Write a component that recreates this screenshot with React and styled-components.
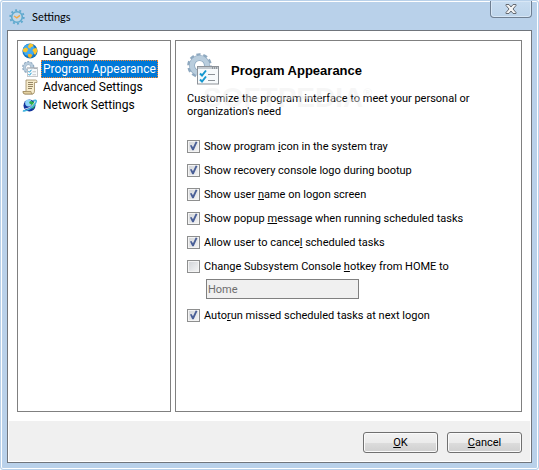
import React, { useState } from 'react'
import styled, { createGlobalStyle } from 'styled-components'

const GlobalStyle = createGlobalStyle`
  * {
    box-sizing: border-box;
  }
  body {
    margin: 0;
    font-family: Roboto, 'Noto Sans', sans-serif;
    font-size: 11px;
    color: #000;
  }
  button, input {
    font: inherit;
    color: inherit;
  }
`

const Window = styled.div`
  display: flex;
  flex-direction: column;
  min-height: 100vh;
  padding: 0 6px 6px;
  border: 1px solid #b9d1ea;
  border-radius: 3px;
  background: #b9d1ea;
  box-shadow: inset 0 0 0 1px #fff;
`

const TitleBar = styled.header`
  display: flex;
  align-items: center;
  gap: 7px;
  height: 29px;
  padding: 2px 2px 0;
  font-family: Lato, 'Noto Sans', sans-serif;
`

const CloseButton = styled.button`
  display: flex;
  justify-content: center;
  align-self: flex-start;
  width: 42px;
  height: 17px;
  margin: -2px -2px 0 auto;
  padding: 3px 0 0;
  border: 1px solid #6f7f92;
  border-top: 0;
  border-radius: 0 0 4px 4px;
  background: linear-gradient(#c8dcf0, #bdd4eb);
  box-shadow: inset 0 0 0 1px #d8e7f6;
`

const Client = styled.div`
  flex: 1;
  display: flex;
  flex-direction: column;
  border: 1px solid #70757c;
  background: #fff;
`

const Columns = styled.main`
  flex: 1;
  display: grid;
  grid-template-columns: 154px 1fr;
  gap: 4px;
  padding: 9px;
`

const Menu = styled.nav`
  display: flex;
  flex-direction: column;
  align-items: flex-start;
  border: 1px solid #808080;
  padding: 1px 4px;
`

const MenuItem = styled.button`
  display: flex;
  align-items: center;
  gap: 3px;
  height: 18px;
  padding: 0;
  border: 0;
  background: none;
  font-size: 12px;
  white-space: nowrap;
`

const MenuLabel = styled.span`
  height: 18px;
  padding: 0 1px;
  line-height: 16px;
  border: 1px dotted ${(props) => (props.$active ? '#ff8728' : 'transparent')};
  background: ${(props) => (props.$active ? '#0078d7' : 'none')};
  color: ${(props) => (props.$active ? '#fff' : '#000')};
`

const Page = styled.section`
  border: 1px solid #808080;
  padding: 12px 11px;
`

const PageHeader = styled.div`
  display: flex;
  align-items: center;
  gap: 12px;
`

const Title = styled.h1`
  margin: 2px 0 0;
  font-family: 'Liberation Sans', Arial, sans-serif;
  font-size: 13px;
`

const Intro = styled.div`
  position: relative;
  margin-top: 7px;
`

const Description = styled.p`
  margin: 0;
  line-height: 13px;
`

const Watermark = styled.span`
  position: absolute;
  left: 16px;
  top: -8px;
  font-family: 'Liberation Sans', Arial, sans-serif;
  font-size: 28px;
  font-weight: bold;
  line-height: 28px;
  color: rgba(236, 236, 236, 0.45);
  pointer-events: none;

  sup {
    font-size: 12px;
    line-height: 0;
  }
`

const Options = styled.div`
  display: flex;
  flex-direction: column;
  gap: 8px;
  margin-top: 20px;
`

const Option = styled.label`
  display: flex;
  align-items: center;
  gap: 4px;
  height: 16px;
`

const CheckBox = styled.input`
  appearance: none;
  width: 13px;
  height: 13px;
  margin: 0;
  border: 1px solid #8e8f8f;
  background: linear-gradient(135deg, #d0d3d7, #f6f6f6);
  box-shadow: inset 0 0 0 1px #f4f4f4;

  &:checked::after {
    content: '';
    display: block;
    width: 11px;
    height: 11px;
    background: #4a5f97;
    clip-path: polygon(18% 46%, 32% 42%, 45% 62%, 70% 10%, 86% 14%, 52% 88%, 38% 88%);
  }
`

const HotkeyInput = styled.input`
  display: block;
  width: 153px;
  height: 20px;
  margin: 5px 0 0 19px;
  padding: 0 1px;
  border: 1px solid #808080;
  background: #f0f0f0;
  color: #6d6d6d;
`

const Footer = styled.footer`
  display: flex;
  justify-content: flex-end;
  gap: 9px;
  margin: 0 1px 1px;
  padding: 11px 8px 8px;
  background: #f0f0f0;
`

const Button = styled.button`
  width: 75px;
  height: 21px;
  padding: 0;
  border: 1px solid #707070;
  border-radius: 3px;
  background: linear-gradient(#f2f2f2, #ebebeb 50%, #dddddd 50%, #cfcfcf);
  box-shadow: inset 0 0 0 1px #fafafa;
`

function AppIcon() {
  return (
    <svg width="16" height="16" viewBox="0 0 16 16">
      <circle cx="8" cy="8" r="6.8" fill="none" stroke="#5ea9ce" strokeWidth="1.8" strokeDasharray="2 2.27" />
      <circle cx="8" cy="8" r="5.3" fill="#c3d8e8" stroke="#5ea9ce" strokeWidth="1.6" />
      <path d="M5 7l2.8 1.8L11 6.4" fill="none" stroke="#f0a848" strokeWidth="1.4" />
    </svg>
  )
}

function GlobeIcon() {
  return (
    <svg width="16" height="16" viewBox="0 0 16 16">
      <circle cx="8" cy="8" r="7.6" fill="#1675bd" />
      <circle cx="7" cy="7" r="6" fill="#41aaf0" />
      <path d="M8 .6l3.500 .8-.5 2.200-2 .4-.5 1.500-2-.5-.5-2z" fill="#fcc52c" />
      <path d="M1 6l3-1.500 2 1.500-.5 2-1.500 1.500L1 8.500z" fill="#fcc52c" />
      <path d="M11 6l3.500-1.200.9 3.200-1.800 3.500-1.600-.3-.3-2.200-1.200-1z" fill="#fcc52c" />
      <path d="M6 11l3 0 1.500 1.500-2 2.500-2.300-1z" fill="#f5b21f" />
    </svg>
  )
}

function AppearanceIcon({ size }) {
  return (
    <svg width={size} height={size} viewBox="0 0 32 32">
      <circle cx="12.500" cy="12.500" r="10.500" fill="none" stroke="#8fa9c0" strokeWidth="3.600" strokeDasharray="4 2.600" />
      <circle cx="12.500" cy="12.500" r="7.500" fill="none" stroke="#8fa9c0" strokeWidth="6" />
      <circle cx="12.500" cy="12.500" r="7.600" fill="none" stroke="#b9cddd" strokeWidth="4.600" />
      <rect x="10.500" y="13.500" width="21" height="17.500" fill="#f7fafc" stroke="#8d9298" />
      <path d="M11 14h20v2H11z" fill="#c3c9cf" />
      <path d="M25 15h1M27 15h1M29 15h1" stroke="#5f666d" />
      <path d="M13 20.500l2 2 4-5M13 26.500l2 2 4-5" fill="none" stroke="#1698cf" strokeWidth="2" />
      <path d="M21 21.500h7M21 27.500h7" stroke="#8d9298" />
    </svg>
  )
}

function ScrollIcon() {
  return (
    <svg width="16" height="16" viewBox="0 0 16 16">
      <path d="M4 1h9.500q1.500 0 1.500 1.500v1h-2.500V12q0 3-2 3H3q-2 0-2-2.500h3z" fill="#f6ebcb" stroke="#a08b62" strokeWidth=".8" />
      <path d="M1 12.500h8q0 2.500 1.500 2.500H3q-2 0-2-2.500z" fill="#e4d2a3" stroke="#a08b62" strokeWidth=".8" />
      <path d="M6 3.500h5M6 5.500h5M6 7.500h5M6 9.500h4" stroke="#8b7b59" strokeWidth=".9" />
    </svg>
  )
}

function NetworkIcon() {
  return (
    <svg width="16" height="16" viewBox="0 0 16 16">
      <circle cx="7.500" cy="8.500" r="6" fill="#12339c" />
      <circle cx="6.500" cy="6" r="3.400" fill="#8ed4f8" />
      <path d="M8 4l4 1 1 4-2 3-2-2 1-2-3-2z" fill="#2fae45" />
      <path d="M1 13.500c2 1.500 11-3 13-8.500 1-2-1-2-3-1.300" fill="none" stroke="#42b4dd" strokeWidth="1.600" />
      <path d="M3 12c4-.5 8-3.500 10-7" fill="none" stroke="#fff" strokeWidth=".8" />
    </svg>
  )
}

function CloseIcon() {
  return (
    <svg width="12" height="10" viewBox="0 0 12 10">
      <path d="M1 .5h3L6 3 8 .5h3v1L8 5l3 3.500v1H8L6 7 4 9.500H1v-1L4 5 1 1.500z" fill="#f4f4f4" stroke="#666b73" strokeLinejoin="round" />
    </svg>
  )
}

const pages = [
  { name: 'Language', icon: <GlobeIcon /> },
  { name: 'Program Appearance', icon: <AppearanceIcon size={16} /> },
  { name: 'Advanced Settings', icon: <ScrollIcon /> },
  { name: 'Network Settings', icon: <NetworkIcon /> },
]

function Check({ checked, children }) {
  return (
    <Option>
      <CheckBox type="checkbox" defaultChecked={checked} />
      <span>{children}</span>
    </Option>
  )
}

function App() {
  const [active, setActive] = useState('Program Appearance')

  return (
    <>
      <GlobalStyle />
      <Window>
        <TitleBar>
          <AppIcon />
          <span>Settings</span>
          <CloseButton aria-label="Close">
            <CloseIcon />
          </CloseButton>
        </TitleBar>
        <Client>
          <Columns>
            <Menu>
              {pages.map((page) => (
                <MenuItem key={page.name} onClick={() => setActive(page.name)}>
                  {page.icon}
                  <MenuLabel $active={page.name === active}>{page.name}</MenuLabel>
                </MenuItem>
              ))}
            </Menu>
            <Page>
              <PageHeader>
                <AppearanceIcon size={32} />
                <Title>Program Appearance</Title>
              </PageHeader>
              <Intro>
                <Description>
                  Customize the program interface to meet your personal or
                  <br />
                  organization's need
                </Description>
                <Watermark aria-hidden="true">
                  SOFTPEDIA<sup>®</sup>
                </Watermark>
              </Intro>
              <Options>
                <Check checked>Show program <u>i</u>con in the system tray</Check>
                <Check checked>Show recovery console lo<u>g</u>o during bootup</Check>
                <Check checked>Show user <u>n</u>ame on logon screen</Check>
                <Check checked>Show popup <u>m</u>essage when running scheduled tasks</Check>
                <Check checked>Allow user to cance<u>l</u> scheduled tasks</Check>
                <div>
                  <Check>Change Subsystem Console <u>h</u>otkey from HOME to</Check>
                  <HotkeyInput aria-label="Hotkey" defaultValue="Home" disabled />
                </div>
                <Check checked>Auto<u>r</u>un missed scheduled tasks at next logon</Check>
              </Options>
            </Page>
          </Columns>
          <Footer>
            <Button><u>O</u>K</Button>
            <Button><u>C</u>ancel</Button>
          </Footer>
        </Client>
      </Window>
    </>
  )
}

export default App
